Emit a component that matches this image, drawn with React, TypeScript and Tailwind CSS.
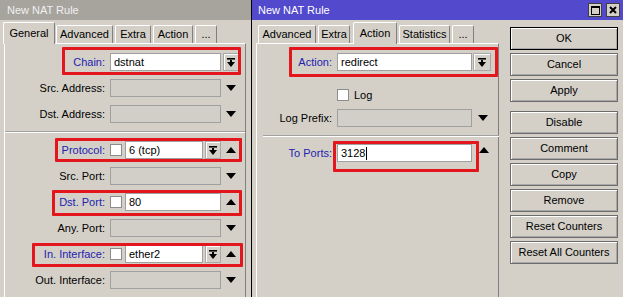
import React from "react";

const win = "bg-[#d4d0c8]";

function DownArrow() {
  return (
    <svg width="10" height="6" viewBox="0 0 10 6">
      <path d="M0 0h10L5 6z" fill="#000" />
    </svg>
  );
}

function UpArrow() {
  return (
    <svg width="10" height="6" viewBox="0 0 10 6">
      <path d="M0 6h10L5 0z" fill="#000" />
    </svg>
  );
}

function DropBtn({ w = "w-[16px]" }: { w?: string }) {
  return (
    <div className={`flex h-[18px] ${w} items-center justify-center border border-[#a8a8a8] bg-[#d4d0c8] shadow-[inset_1px_1px_0_#fff]`}>
      <svg width="8" height="9" viewBox="0 0 8 9">
        <rect x="0" y="0" width="8" height="1.6" fill="#000" />
        <rect x="3" y="2" width="2" height="3" fill="#000" />
        <path d="M0 4h8L4 9z" fill="#000" />
      </svg>
    </div>
  );
}

function Check() {
  return <div className="h-[12px] w-[12px] shrink-0 border border-[#8c8c8c] bg-white" />;
}

function Field({ value, w, cursor }: { value?: string; w: string; cursor?: boolean }) {
  return (
    <div
      className={`flex h-[18px] ${w} items-center border border-[#a0a0a0] pl-[3px] ${
        value !== undefined ? "bg-white" : "bg-[#d2cfc8]"
      }`}
    >
      {value}
      {cursor && <span className="ml-[1px] h-[13px] w-px bg-black" />}
    </div>
  );
}

function Row({
  label,
  blue,
  lw,
  h = "h-[26px]",
  box,
  children,
}: {
  label: string;
  blue?: boolean;
  lw: string;
  h?: string;
  box?: string;
  children: React.ReactNode;
}) {
  return (
    <div className={`relative flex ${h} items-center`}>
      <div className={`${lw} shrink-0 pr-[5px] text-right ${blue ? "text-[#2222b0]" : "text-black"}`}>{label}</div>
      {children}
      {box && <div className={`pointer-events-none absolute rounded-[1px] border-[3px] border-[#e2161c] ${box}`} />}
    </div>
  );
}

function Slot({ children, w = "w-[16px]" }: { children?: React.ReactNode; w?: string }) {
  return <div className={`ml-[2px] flex ${w} shrink-0 items-center justify-center`}>{children}</div>;
}

function Tab({ label, active, cls }: { label: string; active?: boolean; cls: string }) {
  return (
    <div
      className={`${cls} flex items-center justify-center rounded-t-[2px] border-l border-r border-t border-l-white border-r-[#808080] border-t-white bg-[#d4d0c8] ${
        active ? "relative z-10 -mb-px h-[22px]" : "h-[18px]"
      }`}
    >
      {label}
    </div>
  );
}

function Sep({ cls }: { cls: string }) {
  return <div className={`${cls} h-[2px] border-t border-[#a0a0a0] border-b border-b-white`} />;
}

function Btn({ label, def, cls = "" }: { label: string; def?: boolean; cls?: string }) {
  return (
    <div
      className={`${cls} flex h-[23px] w-[108px] items-center justify-center border ${
        def ? "border-black" : "border-[#6c6c6c]"
      } bg-[#d4d0c8] shadow-[inset_1px_1px_0_#fff,inset_-1px_-1px_0_#a8a8a8]`}
    >
      {label}
    </div>
  );
}

function LeftWindow() {
  const lw = "w-[105px]";
  return (
    <div className={`flex h-full w-[251px] shrink-0 flex-col ${win}`}>
      <div className="flex h-[20px] items-center bg-[#a7a49e] pl-[7px] text-[#f0f0f0]">New NAT Rule</div>
      <div className="flex h-[23px] items-end">
        <Tab label="General" active cls="ml-[3px] w-[52px]" />
        <Tab label="Advanced" cls="ml-[1px] w-[57px]" />
        <Tab label="Extra" cls="ml-[2px] w-[36px]" />
        <Tab label="Action" cls="ml-[2px] w-[40px]" />
        <Tab label="..." cls="ml-[2px] w-[22px]" />
      </div>
      <div className="ml-[4px] w-[242px] flex-1 border-l border-r border-t border-l-white border-r-[#808080] border-t-white pt-[5px]">
        <Row label="Chain:" blue lw={lw} box="left-[57px] top-[-2px] h-[28px] w-[179px]">
          <Field value="dstnat" w="w-[111px]" />
          <Slot>
            <DropBtn />
          </Slot>
        </Row>
        <Row label="Src. Address:" lw={lw}>
          <Field w="w-[111px]" />
          <Slot>
            <DownArrow />
          </Slot>
        </Row>
        <Row label="Dst. Address:" lw={lw}>
          <Field w="w-[111px]" />
          <Slot>
            <DownArrow />
          </Slot>
        </Row>
        <Sep cls="my-[4px] w-full" />
        <Row label="Protocol:" blue lw={lw} box="left-[50px] top-[1px] h-[24px] w-[187px]">
          <Check />
          <div className="ml-[3px]">
            <Field value="6 (tcp)" w="w-[78px]" />
          </div>
          <div className="ml-[2px]">
            <DropBtn />
          </div>
          <Slot>
            <UpArrow />
          </Slot>
        </Row>
        <Row label="Src. Port:" lw={lw}>
          <Field w="w-[111px]" />
          <Slot>
            <DownArrow />
          </Slot>
        </Row>
        <Row label="Dst. Port:" blue lw={lw} box="left-[47px] top-[1px] h-[26px] w-[190px]">
          <Check />
          <div className="ml-[3px]">
            <Field value="80" w="w-[96px]" />
          </div>
          <Slot>
            <UpArrow />
          </Slot>
        </Row>
        <Row label="Any. Port:" lw={lw}>
          <Field w="w-[111px]" />
          <Slot>
            <DownArrow />
          </Slot>
        </Row>
        <Row label="In. Interface:" blue lw={lw} box="left-[27px] top-[2px] h-[24px] w-[211px]">
          <Check />
          <div className="ml-[3px]">
            <Field value="ether2" w="w-[78px]" />
          </div>
          <div className="ml-[2px]">
            <DropBtn />
          </div>
          <Slot>
            <UpArrow />
          </Slot>
        </Row>
        <Row label="Out. Interface:" lw={lw}>
          <Field w="w-[111px]" />
          <Slot>
            <DownArrow />
          </Slot>
        </Row>
      </div>
    </div>
  );
}

function RightWindow() {
  const lw = "w-[80px]";
  return (
    <div className={`flex h-full flex-1 flex-col border-l border-black ${win}`}>
      <div className="flex h-[20px] items-center bg-[#5249cc] pl-[6px] text-white">
        <span className="flex-1">New NAT Rule</span>
        <div className="mr-[4px] flex h-[14px] w-[14px] items-center justify-center border border-[#404040] bg-[#d4d0c8]">
          <div className="h-[9px] w-[9px] border border-black border-t-2" />
        </div>
        <div className="mr-[3px] flex h-[14px] w-[14px] items-center justify-center border border-[#404040] bg-[#d4d0c8]">
          <svg width="8" height="8" viewBox="0 0 8 8">
            <path d="M1 1L7 7M7 1L1 7" stroke="#000" strokeWidth="2" />
          </svg>
        </div>
      </div>
      <div className="flex flex-1">
        <div className="flex w-[247px] flex-col">
          <div className="flex h-[23px] items-end">
            <Tab label="Advanced" cls="ml-[6px] w-[58px]" />
            <Tab label="Extra" cls="ml-[2px] w-[32px]" />
            <Tab label="Action" active cls="ml-[3px] w-[44px]" />
            <Tab label="Statistics" cls="ml-[2px] w-[51px]" />
            <Tab label="..." cls="ml-[2px] w-[22px]" />
          </div>
          <div className="ml-[4px] w-[243px] flex-1 border-l border-r border-t border-l-white border-r-[#808080] border-t-white pt-[5px]">
            <Row label="Action:" blue lw={lw} box="left-[32px] top-[-2px] h-[30px] w-[209px]">
              <Field value="redirect" w="w-[135px]" />
              <div className="ml-[1px]">
                <DropBtn w="w-[18px]" />
              </div>
            </Row>
            <div className="mt-[10px] flex h-[20px] items-center pl-[80px]">
              <Check />
              <span className="ml-[5px]">Log</span>
            </div>
            <Row label="Log Prefix:" lw={lw}>
              <Field w="w-[135px]" />
              <Slot w="w-[18px]">
                <DownArrow />
              </Slot>
            </Row>
            <Sep cls="mt-[4px] ml-[6px] w-[236px]" />
            <div className="h-[3px]" />
            <Row label="To Ports:" blue lw={lw} box="left-[76px] top-[1px] h-[31px] w-[146px]">
              <Field value="3128" w="w-[135px]" cursor />
              <div className="ml-[7px] -mt-[6px] flex">
                <UpArrow />
              </div>
            </Row>
          </div>
        </div>
        <div className="ml-[11px] flex w-[108px] flex-col pt-[7px]">
          <Btn label="OK" def />
          <Btn label="Cancel" cls="mt-[3px]" />
          <Btn label="Apply" cls="mt-[3px]" />
          <Btn label="Disable" cls="mt-[9px]" />
          <Btn label="Comment" cls="mt-[3px]" />
          <Btn label="Copy" cls="mt-[3px]" />
          <Btn label="Remove" cls="mt-[3px]" />
          <Btn label="Reset Counters" cls="mt-[3px]" />
          <Btn label="Reset All Counters" cls="mt-[3px]" />
        </div>
      </div>
    </div>
  );
}

export default function App() {
  return (
    <div
      className="flex h-[297px] w-[623px] overflow-hidden text-[11px] leading-none text-black"
      style={{ fontFamily: '"Liberation Sans", Arial, sans-serif' }}
    >
      <LeftWindow />
      <RightWindow />
    </div>
  );
}
